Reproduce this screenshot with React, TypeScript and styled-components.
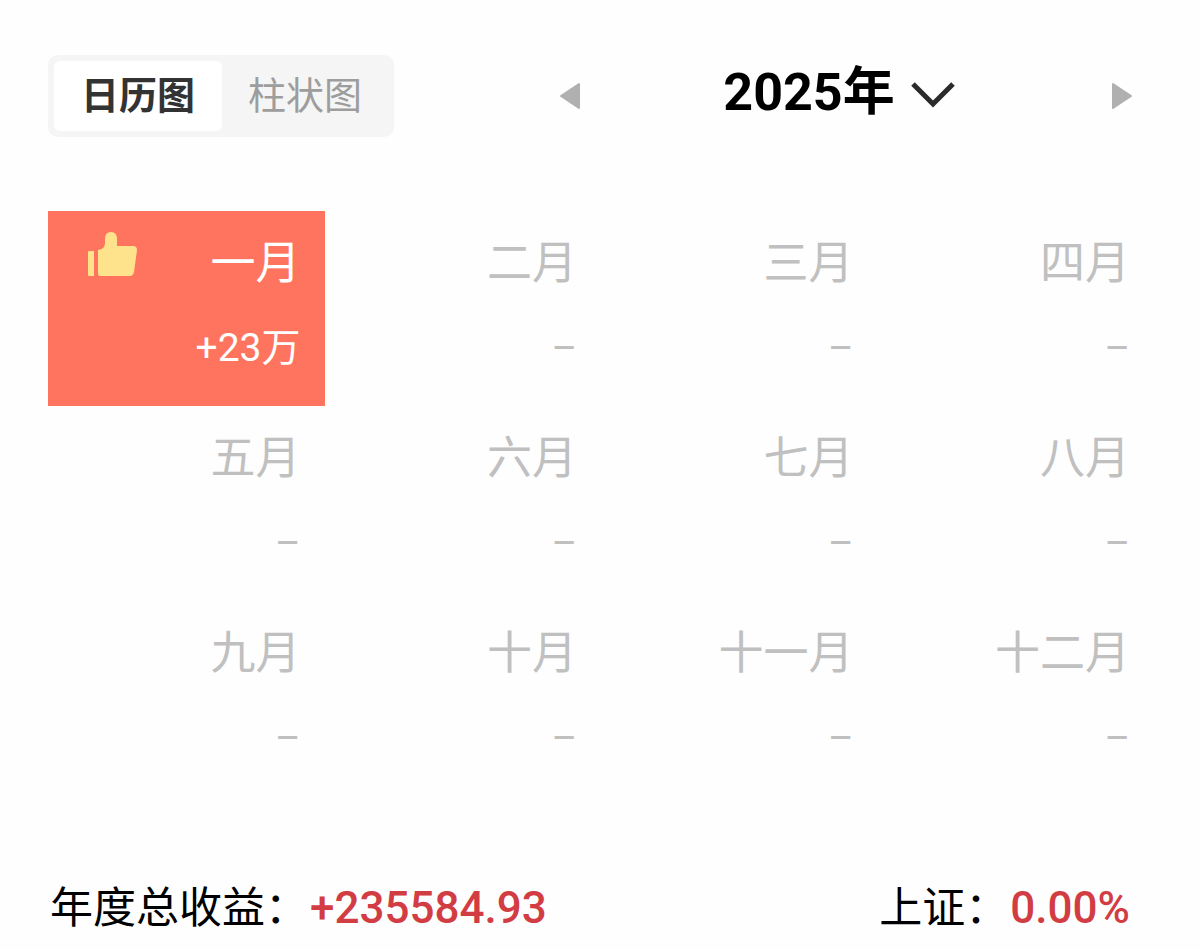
import React, { useState } from "react";
import styled, { createGlobalStyle } from "styled-components";

const GlobalStyle = createGlobalStyle`
  *, *::before, *::after { box-sizing: border-box; }
  body {
    margin: 0;
    background: #fefefe;
    font-family: Roboto, "Noto Sans CJK SC", sans-serif;
    color: #000;
  }
  button { font-family: inherit; border: 0; padding: 0; background: none; cursor: pointer; }
`;

const Page = styled.main`
  padding: 55px 46px 0 48px;
`;

const Header = styled.header`
  display: flex;
  align-items: center;
  justify-content: space-between;
  padding-right: 20px;
`;

const Tabs = styled.div`
  display: flex;
  padding: 6px;
  border-radius: 10px;
  background: #f5f5f5;
`;

const Tab = styled.button<{ $active: boolean }>`
  height: 70px;
  width: ${(p) => (p.$active ? 168 : 166)}px;
  border-radius: 6px;
  font-size: 38px;
  line-height: 48px;
  font-weight: ${(p) => (p.$active ? 700 : 400)};
  color: ${(p) => (p.$active ? "#333" : "#9d9d9d")};
  background: ${(p) => (p.$active ? "#fff" : "transparent")};
`;

const YearNav = styled.nav`
  display: flex;
  align-items: center;
  justify-content: space-between;
  flex: 0 1 576px;
`;

const ArrowButton = styled.button`
  display: flex;
  color: #b0b0b0;
`;

const YearButton = styled.button`
  display: flex;
  align-items: center;
  gap: 16px;
  padding-right: 14px;
  font-size: 52px;
  line-height: 64px;
  font-weight: 700;
  color: #000;
`;

const YearText = styled.span`
  padding-bottom: 6px;
`;

const Months = styled.ul`
  display: grid;
  grid-template-columns: repeat(4, 1fr);
  grid-auto-rows: 195px;
  margin: 74px 0 0;
  padding: 0;
  list-style: none;
`;

const Month = styled.li<{ $active: boolean }>`
  display: grid;
  grid-template-columns: 1fr auto;
  align-content: start;
  row-gap: 28px;
  padding: 20px 24px 0 38px;
  color: ${(p) => (p.$active ? "#fff" : "#c0c0c0")};
  background: ${(p) => (p.$active ? "#ff745e" : "transparent")};
`;

const Badge = styled.span`
  display: flex;
`;

const MonthName = styled.span`
  font-size: 45px;
  line-height: 65px;
`;

const Profit = styled.span`
  grid-column: 1 / -1;
  font-size: 39px;
  line-height: 48px;
  text-align: right;
`;

const Footer = styled.footer`
  display: flex;
  justify-content: space-between;
  margin-top: 80px;
  padding-right: 24px;
  font-size: 43px;
  line-height: 64px;
`;

const Stat = styled.p`
  display: flex;
  gap: 2px;
  margin: 0;
  padding-left: 2px;
`;

const Amount = styled.strong`
  font-size: 44px;
  font-weight: 500;
  color: #d23c43;
`;

const Triangle = ({ d }: { d: string }) => (
  <svg width="24" height="30" viewBox="0 0 24 30" aria-hidden="true">
    <path d={d} fill="currentColor" stroke="currentColor" strokeWidth="2" strokeLinejoin="round" />
  </svg>
);

const Chevron = () => (
  <svg width="44" height="28" viewBox="0 0 44 28" aria-hidden="true">
    <path d="M2 2 22 22 42 2" fill="none" stroke="#2b2b2b" strokeWidth="5" />
  </svg>
);

const ThumbUp = () => (
  <svg width="52" height="48" viewBox="0 0 52 48" role="img" aria-label="赞">
    <g fill="#ffe38c">
      <path d="M3 20H8V45H3Q2 45 2 44V21Q2 20 3 20Z" />
      <path d="M12 19Q19 18 19 12V8Q19 1 25 1Q31 1 31 8V15H47Q51 15 51 19L48 41Q47 45 44 45H14Q12 45 12 43Z" />
    </g>
  </svg>
);

const TABS = ["日历图", "柱状图"];
const MONTHS = ["一月", "二月", "三月", "四月", "五月", "六月", "七月", "八月", "九月", "十月", "十一月", "十二月"];
const PROFITS: Record<string, string> = { 一月: "+23万" };

export default function App() {
  const [tab, setTab] = useState(TABS[0]);

  return (
    <>
      <GlobalStyle />
      <Page>
        <Header>
          <Tabs role="tablist">
            {TABS.map((name) => (
              <Tab key={name} role="tab" aria-selected={tab === name} $active={tab === name} onClick={() => setTab(name)}>
                {name}
              </Tab>
            ))}
          </Tabs>
          <YearNav aria-label="年份">
            <ArrowButton aria-label="上一年">
              <Triangle d="M21 3V27L3 15Z" />
            </ArrowButton>
            <YearButton aria-haspopup="listbox">
              <YearText>2025年</YearText>
              <Chevron />
            </YearButton>
            <ArrowButton aria-label="下一年">
              <Triangle d="M3 3V27L21 15Z" />
            </ArrowButton>
          </YearNav>
        </Header>

        <Months>
          {MONTHS.map((name) => {
            const profit = PROFITS[name];
            return (
              <Month key={name} $active={Boolean(profit)}>
                <Badge>{profit && <ThumbUp />}</Badge>
                <MonthName>{name}</MonthName>
                <Profit>{profit ?? "–"}</Profit>
              </Month>
            );
          })}
        </Months>

        <Footer>
          <Stat>
            年度总收益：<Amount>+235584.93</Amount>
          </Stat>
          <Stat>
            上证：<Amount>0.00%</Amount>
          </Stat>
        </Footer>
      </Page>
    </>
  );
}
